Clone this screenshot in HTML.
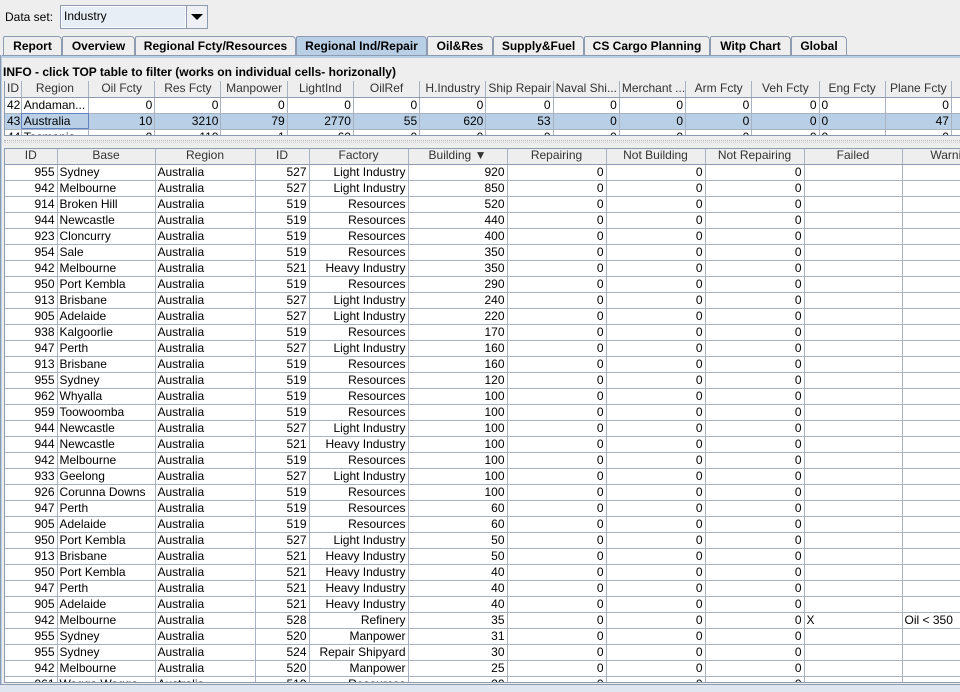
<!DOCTYPE html>
<html><head><meta charset="utf-8"><style>
*{box-sizing:border-box;margin:0;padding:0}
body{width:960px;height:692px;background:#eeeeee;font-family:"Liberation Sans",Arial,sans-serif;font-size:12px;color:#000;position:relative;overflow:hidden}
.abs{position:absolute}
.tab{position:absolute;top:36px;height:20px;border:1px solid #8c9bb0;border-bottom:none;background:#eeeeee;font-weight:bold;text-align:center;line-height:18px;font-size:12px;border-radius:2px 4px 0 0}
.tab.sel{background:#b8cfe5}
table{border-collapse:collapse;table-layout:fixed;font-size:12px}
td,th{height:16px;line-height:15px;padding:0 2px;border-right:1px solid #a9b2c0;border-bottom:1px solid #a9b2c0;white-space:nowrap;overflow:hidden;font-weight:normal}
th{background:#eeeeee;text-align:center;color:#333;border-right:1px solid #a9b2c0;border-bottom:1px solid #8c9bb0;height:16px}
td{background:#fff}
td.r{text-align:right}
tr.sel td{background:#b8cfe5}
</style></head><body>
<div class="abs" style="left:5px;top:9px;font-size:12px;line-height:16px">Data set:</div>
<div class="abs" style="left:60px;top:5px;width:148px;height:24px;border:1px solid #8c9bb0;background:#fff"></div>
<div class="abs" style="left:62px;top:7px;width:123px;height:20px;background:#e8eef5;line-height:19px;padding-left:2px">Industry</div>
<div class="abs" style="left:186px;top:6px;width:21px;height:22px;background:#eef0f3;border-left:1px solid #8c9bb0"></div>
<div class="abs" style="left:191px;top:14px;width:0;height:0;border-left:6px solid transparent;border-right:6px solid transparent;border-top:6px solid #000"></div>

<div class="tab" style="left:3px;width:59px">Report</div>
<div class="tab" style="left:62px;width:73px">Overview</div>
<div class="tab" style="left:135px;width:161px">Regional Fcty/Resources</div>
<div class="tab sel" style="left:296px;width:131px">Regional Ind/Repair</div>
<div class="tab" style="left:427px;width:66px">Oil&amp;Res</div>
<div class="tab" style="left:493px;width:91px">Supply&amp;Fuel</div>
<div class="tab" style="left:584px;width:126px">CS Cargo Planning</div>
<div class="tab" style="left:710px;width:81px">Witp Chart</div>
<div class="tab" style="left:791px;width:56px">Global</div>
<div class="abs" style="left:0;top:55px;width:960px;height:3px;background:#b8cfe5;border-top:1px solid #8c9bb0"></div>
<div class="abs" style="left:0;top:55px;width:2px;height:632px;background:#b8cfe5;border-left:1px solid #8c9bb0"></div>
<div class="abs" style="left:0;top:684px;width:960px;height:8px;background:#dfe6ef;border-top:1px solid #8c9bb0"></div>

<div class="abs" style="left:3px;top:64px;font-weight:bold;line-height:16px">INFO - click TOP table to filter (works on individual cells- horizonally)</div>

<div class="abs" style="left:4px;top:81px;width:956px;height:54px;overflow:hidden;border-left:1px solid #8c9bb0;background:#fff">
<table style="width:1048px">
<colgroup><col style="width:16px"><col style="width:66px"><col style="width:65px"><col style="width:65px"><col style="width:65px"><col style="width:65px"><col style="width:65px"><col style="width:65px"><col style="width:66px"><col style="width:65px"><col style="width:65px"><col style="width:65px"><col style="width:66px"><col style="width:65px"><col style="width:65px"><col style="width:99px"></colgroup>
<tr><th>ID</th><th>Region</th><th>Oil Fcty</th><th>Res Fcty</th><th>Manpower</th><th>LightInd</th><th>OilRef</th><th>H.Industry</th><th>Ship Repair</th><th>Naval Shi...</th><th>Merchant ...</th><th>Arm Fcty</th><th>Veh Fcty</th><th>Eng Fcty</th><th>Plane Fcty</th><th># Pilots</th></tr>
<tr><td class="r">42</td><td>Andaman...</td><td class="r">0</td><td class="r">0</td><td class="r">0</td><td class="r">0</td><td class="r">0</td><td class="r">0</td><td class="r">0</td><td class="r">0</td><td class="r">0</td><td class="r">0</td><td class="r">0</td><td>0</td><td class="r">0</td><td></td></tr>
<tr class="sel"><td class="r">43</td><td style="outline:1px solid #6382bf;outline-offset:-1px">Australia</td><td class="r">10</td><td class="r">3210</td><td class="r">79</td><td class="r">2770</td><td class="r">55</td><td class="r">620</td><td class="r">53</td><td class="r">0</td><td class="r">0</td><td class="r">0</td><td class="r">0</td><td>0</td><td class="r">47</td><td></td></tr>
<tr><td class="r">44</td><td>Tasmania</td><td class="r">0</td><td class="r">110</td><td class="r">1</td><td class="r">60</td><td class="r">0</td><td class="r">0</td><td class="r">0</td><td class="r">0</td><td class="r">0</td><td class="r">0</td><td class="r">0</td><td>0</td><td class="r">0</td><td></td></tr>
</table></div>
<div class="abs" style="left:4px;top:135px;width:956px;height:1px;background:#8c9bb0"></div>
<div class="abs" style="left:4px;top:140px;width:956px;height:0;border-top:1px dotted #b0b0b0"></div>
<div class="abs" style="left:4px;top:142px;width:956px;height:0;border-top:1px dotted #c8c8c8"></div>

<div class="abs" style="left:4px;top:148px;width:956px;height:535px;overflow:hidden;border-left:1px solid #8c9bb0;border-top:1px solid #8c9bb0;border-bottom:1px solid #8c9bb0;background:#fff">
<table style="width:998px;margin-top:-1px">
<colgroup><col style="width:52px"><col style="width:98px"><col style="width:100px"><col style="width:54px"><col style="width:99px"><col style="width:99px"><col style="width:99px"><col style="width:99px"><col style="width:99px"><col style="width:98px"><col style="width:101px"></colgroup>
<tr><th>ID</th><th>Base</th><th>Region</th><th>ID</th><th>Factory</th><th>Building &#9660;</th><th>Repairing</th><th>Not Building</th><th>Not Repairing</th><th>Failed</th><th>Warning</th></tr>
<tr><td class="r">955</td><td>Sydney</td><td>Australia</td><td class="r">527</td><td class="r">Light Industry</td><td class="r">920</td><td class="r">0</td><td class="r">0</td><td class="r">0</td><td></td><td></td></tr>
<tr><td class="r">942</td><td>Melbourne</td><td>Australia</td><td class="r">527</td><td class="r">Light Industry</td><td class="r">850</td><td class="r">0</td><td class="r">0</td><td class="r">0</td><td></td><td></td></tr>
<tr><td class="r">914</td><td>Broken Hill</td><td>Australia</td><td class="r">519</td><td class="r">Resources</td><td class="r">520</td><td class="r">0</td><td class="r">0</td><td class="r">0</td><td></td><td></td></tr>
<tr><td class="r">944</td><td>Newcastle</td><td>Australia</td><td class="r">519</td><td class="r">Resources</td><td class="r">440</td><td class="r">0</td><td class="r">0</td><td class="r">0</td><td></td><td></td></tr>
<tr><td class="r">923</td><td>Cloncurry</td><td>Australia</td><td class="r">519</td><td class="r">Resources</td><td class="r">400</td><td class="r">0</td><td class="r">0</td><td class="r">0</td><td></td><td></td></tr>
<tr><td class="r">954</td><td>Sale</td><td>Australia</td><td class="r">519</td><td class="r">Resources</td><td class="r">350</td><td class="r">0</td><td class="r">0</td><td class="r">0</td><td></td><td></td></tr>
<tr><td class="r">942</td><td>Melbourne</td><td>Australia</td><td class="r">521</td><td class="r">Heavy Industry</td><td class="r">350</td><td class="r">0</td><td class="r">0</td><td class="r">0</td><td></td><td></td></tr>
<tr><td class="r">950</td><td>Port Kembla</td><td>Australia</td><td class="r">519</td><td class="r">Resources</td><td class="r">290</td><td class="r">0</td><td class="r">0</td><td class="r">0</td><td></td><td></td></tr>
<tr><td class="r">913</td><td>Brisbane</td><td>Australia</td><td class="r">527</td><td class="r">Light Industry</td><td class="r">240</td><td class="r">0</td><td class="r">0</td><td class="r">0</td><td></td><td></td></tr>
<tr><td class="r">905</td><td>Adelaide</td><td>Australia</td><td class="r">527</td><td class="r">Light Industry</td><td class="r">220</td><td class="r">0</td><td class="r">0</td><td class="r">0</td><td></td><td></td></tr>
<tr><td class="r">938</td><td>Kalgoorlie</td><td>Australia</td><td class="r">519</td><td class="r">Resources</td><td class="r">170</td><td class="r">0</td><td class="r">0</td><td class="r">0</td><td></td><td></td></tr>
<tr><td class="r">947</td><td>Perth</td><td>Australia</td><td class="r">527</td><td class="r">Light Industry</td><td class="r">160</td><td class="r">0</td><td class="r">0</td><td class="r">0</td><td></td><td></td></tr>
<tr><td class="r">913</td><td>Brisbane</td><td>Australia</td><td class="r">519</td><td class="r">Resources</td><td class="r">160</td><td class="r">0</td><td class="r">0</td><td class="r">0</td><td></td><td></td></tr>
<tr><td class="r">955</td><td>Sydney</td><td>Australia</td><td class="r">519</td><td class="r">Resources</td><td class="r">120</td><td class="r">0</td><td class="r">0</td><td class="r">0</td><td></td><td></td></tr>
<tr><td class="r">962</td><td>Whyalla</td><td>Australia</td><td class="r">519</td><td class="r">Resources</td><td class="r">100</td><td class="r">0</td><td class="r">0</td><td class="r">0</td><td></td><td></td></tr>
<tr><td class="r">959</td><td>Toowoomba</td><td>Australia</td><td class="r">519</td><td class="r">Resources</td><td class="r">100</td><td class="r">0</td><td class="r">0</td><td class="r">0</td><td></td><td></td></tr>
<tr><td class="r">944</td><td>Newcastle</td><td>Australia</td><td class="r">527</td><td class="r">Light Industry</td><td class="r">100</td><td class="r">0</td><td class="r">0</td><td class="r">0</td><td></td><td></td></tr>
<tr><td class="r">944</td><td>Newcastle</td><td>Australia</td><td class="r">521</td><td class="r">Heavy Industry</td><td class="r">100</td><td class="r">0</td><td class="r">0</td><td class="r">0</td><td></td><td></td></tr>
<tr><td class="r">942</td><td>Melbourne</td><td>Australia</td><td class="r">519</td><td class="r">Resources</td><td class="r">100</td><td class="r">0</td><td class="r">0</td><td class="r">0</td><td></td><td></td></tr>
<tr><td class="r">933</td><td>Geelong</td><td>Australia</td><td class="r">527</td><td class="r">Light Industry</td><td class="r">100</td><td class="r">0</td><td class="r">0</td><td class="r">0</td><td></td><td></td></tr>
<tr><td class="r">926</td><td>Corunna Downs</td><td>Australia</td><td class="r">519</td><td class="r">Resources</td><td class="r">100</td><td class="r">0</td><td class="r">0</td><td class="r">0</td><td></td><td></td></tr>
<tr><td class="r">947</td><td>Perth</td><td>Australia</td><td class="r">519</td><td class="r">Resources</td><td class="r">60</td><td class="r">0</td><td class="r">0</td><td class="r">0</td><td></td><td></td></tr>
<tr><td class="r">905</td><td>Adelaide</td><td>Australia</td><td class="r">519</td><td class="r">Resources</td><td class="r">60</td><td class="r">0</td><td class="r">0</td><td class="r">0</td><td></td><td></td></tr>
<tr><td class="r">950</td><td>Port Kembla</td><td>Australia</td><td class="r">527</td><td class="r">Light Industry</td><td class="r">50</td><td class="r">0</td><td class="r">0</td><td class="r">0</td><td></td><td></td></tr>
<tr><td class="r">913</td><td>Brisbane</td><td>Australia</td><td class="r">521</td><td class="r">Heavy Industry</td><td class="r">50</td><td class="r">0</td><td class="r">0</td><td class="r">0</td><td></td><td></td></tr>
<tr><td class="r">950</td><td>Port Kembla</td><td>Australia</td><td class="r">521</td><td class="r">Heavy Industry</td><td class="r">40</td><td class="r">0</td><td class="r">0</td><td class="r">0</td><td></td><td></td></tr>
<tr><td class="r">947</td><td>Perth</td><td>Australia</td><td class="r">521</td><td class="r">Heavy Industry</td><td class="r">40</td><td class="r">0</td><td class="r">0</td><td class="r">0</td><td></td><td></td></tr>
<tr><td class="r">905</td><td>Adelaide</td><td>Australia</td><td class="r">521</td><td class="r">Heavy Industry</td><td class="r">40</td><td class="r">0</td><td class="r">0</td><td class="r">0</td><td></td><td></td></tr>
<tr><td class="r">942</td><td>Melbourne</td><td>Australia</td><td class="r">528</td><td class="r">Refinery</td><td class="r">35</td><td class="r">0</td><td class="r">0</td><td class="r">0</td><td>X</td><td>Oil &lt; 350</td></tr>
<tr><td class="r">955</td><td>Sydney</td><td>Australia</td><td class="r">520</td><td class="r">Manpower</td><td class="r">31</td><td class="r">0</td><td class="r">0</td><td class="r">0</td><td></td><td></td></tr>
<tr><td class="r">955</td><td>Sydney</td><td>Australia</td><td class="r">524</td><td class="r">Repair Shipyard</td><td class="r">30</td><td class="r">0</td><td class="r">0</td><td class="r">0</td><td></td><td></td></tr>
<tr><td class="r">942</td><td>Melbourne</td><td>Australia</td><td class="r">520</td><td class="r">Manpower</td><td class="r">25</td><td class="r">0</td><td class="r">0</td><td class="r">0</td><td></td><td></td></tr>
<tr><td class="r">961</td><td>Wagga Wagga</td><td>Australia</td><td class="r">519</td><td class="r">Resources</td><td class="r">20</td><td class="r">0</td><td class="r">0</td><td class="r">0</td><td></td><td></td></tr>
</table></div>
</body></html>
